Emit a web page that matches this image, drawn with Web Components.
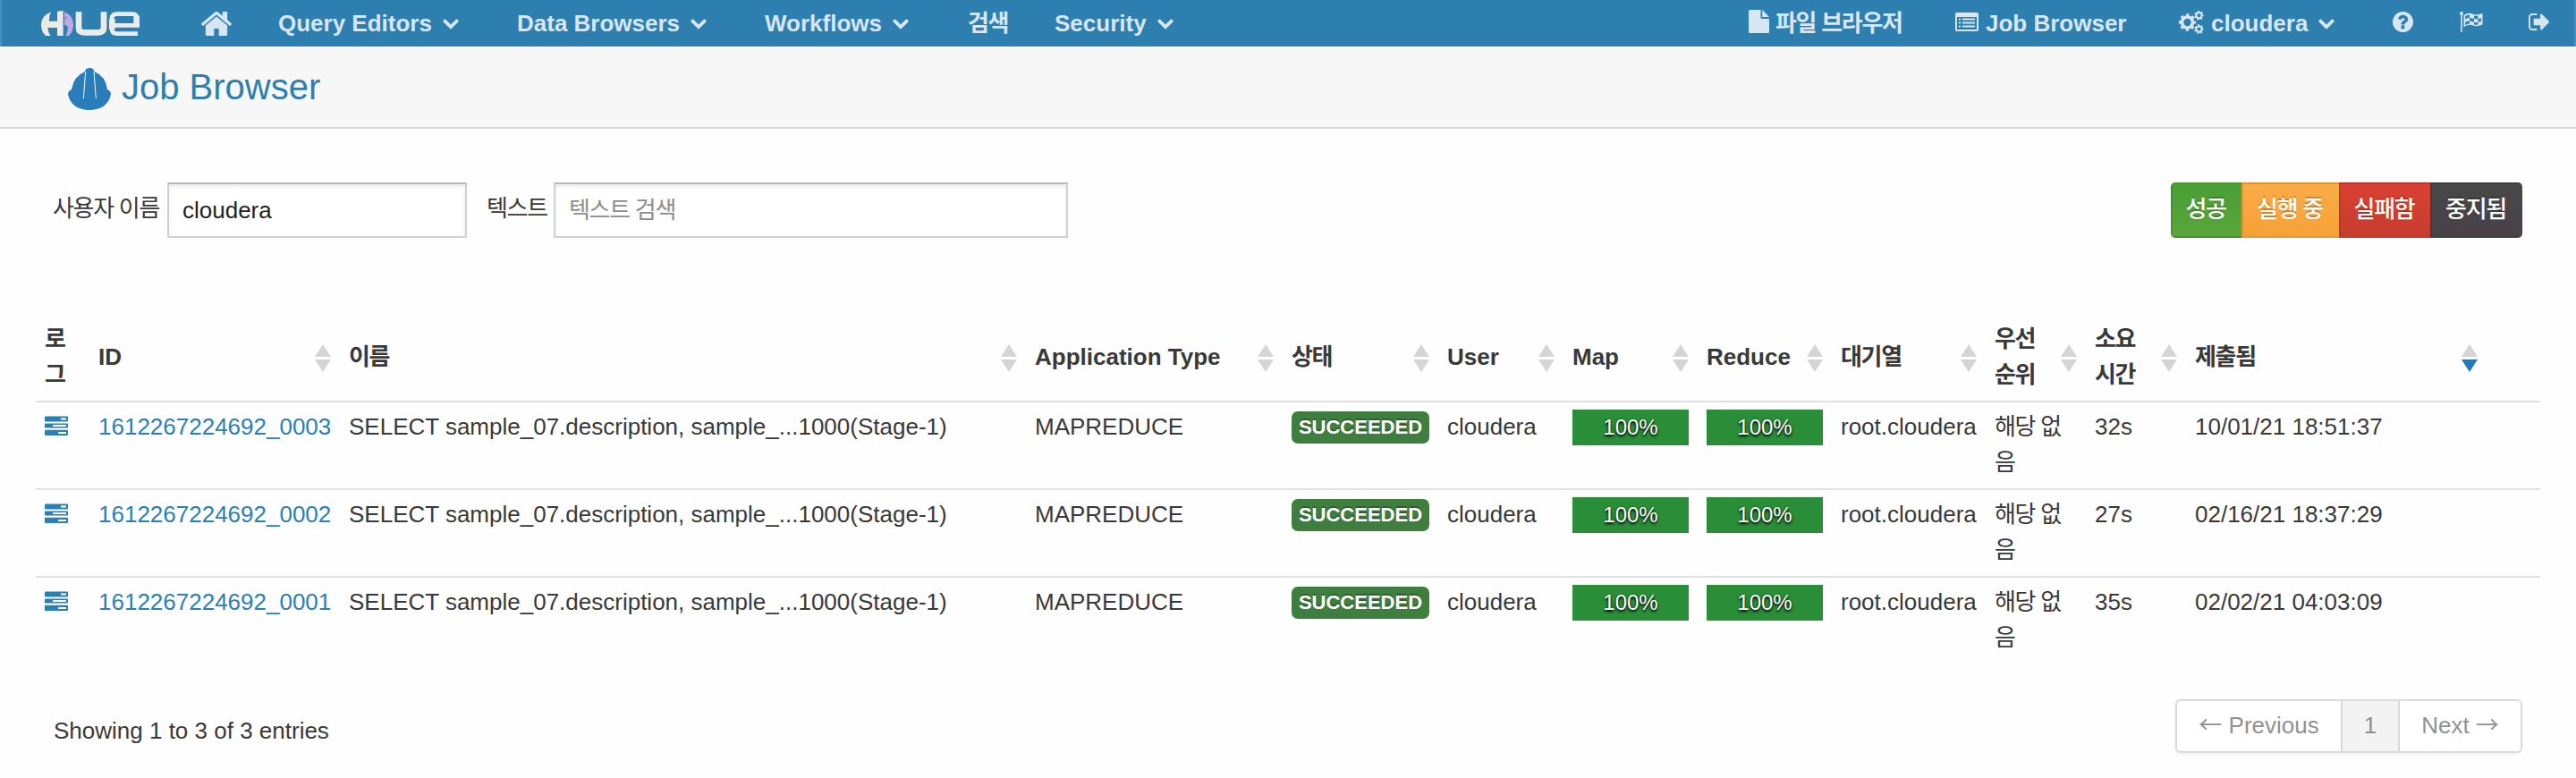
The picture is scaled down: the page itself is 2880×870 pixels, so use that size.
<!DOCTYPE html>
<html lang="ko">
<head>
<meta charset="utf-8">
<title>Job Browser</title>
<style>
html,body{margin:0;padding:0}
body{width:2880px;height:870px;overflow:hidden;background:#fefefe;color:#393939;font:26px/40px "Liberation Sans","Noto Sans CJK KR",sans-serif}
</style>
</head>
<body>
<hue-app></hue-app>
<script>
const define = (name, css, html, setup) => customElements.define(name, class extends HTMLElement {
  connectedCallback() {
    if (this.shadowRoot) return;
    const root = this.attachShadow({ mode: 'open' });
    root.innerHTML = '<style>*{box-sizing:border-box}' + css + '</style>' + (typeof html === 'function' ? html(this) : html);
    if (setup) setup(this, root);
  }
});

const gear = (x, y, r, n, w) => {
  const c = 2 * Math.PI * r;
  return `<circle cx="${x}" cy="${y}" r="${r - w * .45}" fill="none" stroke="currentColor" stroke-width="${w}"/>` +
    `<circle cx="${x}" cy="${y}" r="${r}" fill="none" stroke="currentColor" stroke-width="${w * 1.15}" stroke-dasharray="${c / n / 2}" stroke-dashoffset="${c / n / 4}"/>`;
};

const ICONS = {
  home: ['89 253 1614 1283', 34, 27, '<path d="M1472 992v480q0 26-19 45t-45 19h-384v-384h-256v384h-384q-26 0-45-19t-19-45v-480q0-1 .5-3t.5-3l575-474 575 474q1 2 1 6zm223-69l-62 74q-8 9-21 11h-3q-13 0-21-7l-692-577-692 577q-12 8-24 7-13-2-21-11l-62-74q-8-10-7-23.5t11-21.5l719-599q32-26 76-26t76 26l244 204v-195q0-14 9-23t23-9h192q14 0 23 9t9 23v408l219 182q10 8 11 21.5t-7 23.5z"/>'],
  chevron: ['0 0 18 12', 18, 12, '<path d="M2.4 2.6L9 9L15.6 2.6" fill="none" stroke="currentColor" stroke-width="3.8" stroke-linecap="round"/>'],
  file: ['0 0 23 26', 23, 26, '<path d="M1.5 0H13.5V8.5Q13.5 10 15 10H23V24.5Q23 26 21.5 26H1.5Q0 26 0 24.5V1.5Q0 0 1.5 0zM15.3 0L23 8H15.3z"/>'],
  list: ['0 0 26 21', 26, 21, '<path fill-rule="evenodd" d="M2 0H24Q26 0 26 2V19Q26 21 24 21H2Q0 21 0 19V2Q0 0 2 0zM2 5V18.5Q2 19 2.500 19H23.500Q24 19 24 18.500V5z"/><path d="M4 6.500h2v2H4zm4 0h14v2H8zM4 10.500h2v2H4zm4 0h14v2H8zM4 14.500h2v2H4zm4 0h14v2H8z"/>'],
  gears: ['0 0 28 26', 28, 26, gear(9.5, 13, 7.6, 8, 3.6) + gear(22.5, 5.2, 4.1, 7, 2.1) + gear(22.5, 20.6, 4.1, 7, 2.1)],
  help: ['128 128 1536 1536', 23, 23, '<path d="M1024 1376v-192q0-14-9-23t-23-9h-192q-14 0-23 9t-9 23v192q0 14 9 23t23 9h192q14 0 23-9t9-23zm256-672q0-88-55.500-163t-138.500-116-170-41q-243 0-371 213-15 24 8 42l132 100q7 6 19 6 16 0 25-12 53-68 86-92 34-24 86-24 48 0 85.500 26t37.500 59q0 38-20 61t-68 45q-63 28-115.500 86.500t-52.500 125.500v36q0 14 9 23t23 9h192q14 0 23-9t9-23q0-19 21.500-49.500t54.500-49.500q32-18 49-28.500t46-35 44.500-48 28-60.500 12.500-81zm384 192q0 209-103 385.500t-279.500 279.500-385.500 103-385.500-103-279.500-279.500-103-385.500 103-385.500 279.500-279.500 385.500-103 385.500 103 279.500 279.500 103 385.500z"/>'],
  flag: ['0 0 26 23', 26, 23, '<circle cx="2" cy="2" r="2"/><path d="M1.200 2h1.600v21H1.200z"/><path fill-rule="evenodd" d="M4.500 4Q10 .5 14 2.500T25.500 2V14.500Q19 17.500 15 15.500T4.500 17zM6.200 5V8.500Q8.500 7 11 6.800V3.400Q8.500 3.600 6.200 5zM16 4.500V8Q13.500 7.600 11 6.800V10.600Q13.500 11 16 12V8Q18 8.700 20.500 8V4.500Q18 5 16 4.500zM6.200 11.800V15Q8.500 13.800 11 13.500V10.500Q8.500 10.600 6.200 11.800zM20.500 8V11.800Q22.500 11.500 24 10.800V7Q22.500 7.800 20.500 8zM16 12V14.400Q18 14.900 20.500 14.500V11.800Q18 12.500 16 12z"/>'],
  signout: ['64 256 1568 1280', 23, 19, '<path d="M704 1440q0 4 1 20t.5 26.500-3 23.500-10 19.500-20.500 6.500h-320q-119 0-203.500-84.500t-84.500-203.500v-704q0-119 84.500-203.500t203.500-84.500h320q13 0 22.500 9.500t9.500 22.500q0 4 1 20t.5 26.500-3 23.500-10 19.500-20.500 6.500h-320q-66 0-113 47t-47 113v704q0 66 47 113t113 47h312l11.500 1 11.500 3 8 5.500 7 9 2 13.500zm928-544q0 26-19 45l-544 544q-19 19-45 19t-45-19-19-45v-288h-448q-26 0-45-19t-19-45v-384q0-26 19-45t45-19h448v-288q0-26 19-45t45-19 45 19l544 544q19 19 19 45z"/>'],
  tasks: ['0 0 26 22', 26, 22, '<path fill-rule="evenodd" d="M1 .5H25Q26 .5 26 1.500V5.500Q26 6.500 25 6.500H1Q0 6.500 0 5.500V1.500Q0 .5 1 .5zM18 2.500V4.500H24V2.500zM1 8.500H25Q26 8.500 26 9.500V12.500Q26 13.500 25 13.500H1Q0 13.500 0 12.500V9.500Q0 8.500 1 8.500zM9 10V12H24V10zM1 15.800H25Q26 15.800 26 16.800V21Q26 22 25 22H1Q0 22 0 21V16.800Q0 15.800 1 15.800zM15 18V20H24V18z"/>'],
  hat: ['138 228 144 140', 48, 47, '<path d="M150 300Q158 255 194 241Q197 228 211 228Q224 228 227 241Q264 255 270 300Q282 304 282 316Q270 368 210 368Q150 368 138 316Q138 304 150 300z"/><path d="M197 240L190 330M225 240L232 330" stroke="#f7f7f7" stroke-width="3"/>'],
  logo: ['48 33 330 84', 110, 28, '<g fill="#ebebeb"><path d="M82 37Q74 50 75 68H102V35L122 33V117H102V90H70Q71 106 80 117H63Q48 102 48 80Q48 50 82 37z"/></g><path fill="#bca9e6" d="M126 37Q156 50 156 80Q155 106 140 117H130Q141 96 136 84L126 80z"/><path fill="#2d7fb0" d="M129 55h5v3h-3v4h-2z"/><g fill="none" stroke="#ebebeb"><path stroke-width="20" d="M174 37V90Q174 106 192 106H240Q258 106 258 90V37"/><path stroke-width="14" d="M286 82H370V60Q370 44 354 44H302Q285 44 285 60V94Q285 110 302 110H372"/><path stroke-width="20" d="M286 60V96M368 52V88"/></g>']
};
define('hue-icon', ':host{display:block;flex:none}svg{display:block;fill:currentColor}', el => {
  const [vb, w, h, body] = ICONS[el.getAttribute('name')];
  return `<svg viewBox="${vb}" width="${w}" height="${h}" preserveAspectRatio="none">${body}</svg>`;
});

define('nav-item', ':host{display:flex;align-items:center;flex:none;height:52px;font-weight:700;line-height:52px;white-space:nowrap;letter-spacing:var(--ls,0)}.c{margin:1px 0 0 12px}',
  el => '<slot name="icon"></slot><slot></slot>' + (el.hasAttribute('menu') ? '<hue-icon class="c" name="chevron"></hue-icon>' : ''));

define('nav-bar', `:host{display:flex;height:52px;background:#2d7fb0;color:#d8e6f1;box-shadow:inset 2px 0 #4a90ba,inset -2px 0 #4a90ba}
nav{display:grid;align-items:center}
.l{grid-template-columns:179px 86px 267px 277px 227px 97px 200px;padding-left:46px}
.r{grid-template-columns:231px 250px 239px 75px 77px 53px;margin-left:auto}
.kr{--ls:-1.3px}`,
`<nav class="l"><hue-icon name="logo"></hue-icon><hue-icon name="home"></hue-icon>
<nav-item menu>Query Editors</nav-item><nav-item menu>Data Browsers</nav-item><nav-item menu>Workflows</nav-item><nav-item class="kr">검색</nav-item><nav-item menu>Security</nav-item></nav>
<nav class="r"><nav-item class="kr"><hue-icon slot="icon" name="file" style="margin:-4px 7px 0 0"></hue-icon>파일 브라우저</nav-item>
<nav-item><hue-icon slot="icon" name="list" style="margin:-4px 8px 0 0"></hue-icon>Job Browser</nav-item>
<nav-item menu><hue-icon slot="icon" name="gears" style="margin:-3px 8px 0 0"></hue-icon>cloudera</nav-item>
<hue-icon name="help" style="margin-top:-3px"></hue-icon><hue-icon name="flag" style="margin-top:-3px"></hue-icon><hue-icon name="signout" style="margin-top:-3px"></hue-icon></nav>`);

define('page-title', ':host{display:flex;align-items:center;gap:12px;height:92px;padding-left:76px;background:#f7f7f7;border-bottom:2px solid #d8d8d8;color:#2d7fb0;font-size:40px;box-sizing:border-box}hue-icon{color:#2a7dbb;margin-top:4px}',
'<hue-icon name="hat"></hue-icon><span><slot></slot></span>');

define('filter-field', `:host{display:flex;align-items:center}
label{white-space:nowrap;letter-spacing:-1.300px;width:var(--lw);margin-top:-5px}
input{width:var(--w);height:62px;border:2px solid #d0d0d0;border-top-color:#b8b8b8;padding:0 15px;background:#fff;font:inherit;color:#222;box-shadow:inset 0 3px 4px rgba(0,0,0,.08);letter-spacing:inherit}
input::placeholder{color:#8c8c8c;opacity:1;letter-spacing:-1.300px}`,
el => `<label>${el.getAttribute('label')}</label><input value="${el.getAttribute('value') || ''}" placeholder="${el.getAttribute('hint') || ''}">`);

define('state-button', ':host{display:flex;align-items:center;justify-content:center;box-sizing:border-box;height:62px;width:var(--w);color:#fff;letter-spacing:-1.300px;font-weight:500;background:linear-gradient(var(--a),var(--b));border:2px solid rgba(0,0,0,.1);border-right-width:0;text-shadow:0 -2px 0 rgba(0,0,0,.2)}span{margin:-3px 3px 0 0;white-space:nowrap}', '<span><slot></slot></span>');

define('filter-bar', `:host{display:flex;align-items:center;height:62px;margin-top:60px;padding:0 60px 0 59px}
.g{display:flex;margin-left:auto;border-radius:5px;overflow:hidden}
filter-field{margin-right:22px}`,
`<filter-field label="사용자 이름" value="cloudera" style="--lw:128px;--w:335px"></filter-field>
<filter-field label="텍스트" hint="텍스트 검색" style="--lw:75px;--w:575px"></filter-field>
<div class="g"><state-button style="--w:79px;--a:#499f35;--b:#5aa63c">성공</state-button><state-button style="--w:109px;--a:#fbac46;--b:#f5a136">실행 중</state-button><state-button style="--w:102px;--a:#da4132;--b:#c63d2e">실패함</state-button><state-button style="--w:103px;--a:#484848;--b:#484147">중지됨</state-button></div>`);

define('sort-mark', ':host{display:block;flex:none}svg{display:block}', el =>
  `<svg width="18" height="31" viewBox="0 0 18 31"><path fill="#d5d5d5" d="M9 0L18 14H0z"/><path fill="${el.hasAttribute('desc') ? '#2779b5' : '#d5d5d5'}" d="M0 17H18L9 31z"/></svg>`);

const COLS = '60px 280px 767px 287px 174px 140px 150px 150px 172px 112px 112px 336px 60px';
define('head-cell', ':host{display:flex;align-items:center;justify-content:space-between;padding:0 10px;font-weight:700;height:98px;box-sizing:border-box}:host([kr]){letter-spacing:-1.300px}span{white-space:nowrap;margin-top:-1px}sort-mark{margin-top:3px}',
  el => '<span><slot></slot></span>' + (el.hasAttribute('nosort') ? '' : `<sort-mark ${el.hasAttribute('desc') ? 'desc' : ''}></sort-mark>`));

define('progress-pill', ':host{display:block;height:40px;background:#2a8e39;color:#fff;font-size:24px;line-height:40px;text-align:center;text-shadow:0 2px 3px #000,0 0 2px rgba(0,0,0,.6)}', '<slot></slot>');
define('state-badge', ':host{display:block;height:36px;margin-top:2px;border-radius:7px;background:#3e7e3f;color:#fff;font-weight:700;font-size:22px;line-height:36px;text-align:center;text-shadow:0 -2px 0 rgba(0,0,0,.25)}', '<slot></slot>');

define('job-row', `:host{display:grid;grid-template-columns:${COLS};height:98px;box-sizing:border-box;border-top:2px solid #e0e0e0}
div{padding:8px 10px;white-space:nowrap}
.t{margin-top:-1px}
.kr{white-space:normal;letter-spacing:-1.300px;word-break:break-all}
.a{color:#2d7fb0}.i{padding-top:15px}`,
el => { const g = n => el.getAttribute(n); return `<div class="a i"><hue-icon name="tasks"></hue-icon></div><div class="a t">${g('job')}</div><div class="t">SELECT sample_07.description, sample_...1000(Stage-1)</div><div class="t">MAPREDUCE</div><div><state-badge>SUCCEEDED</state-badge></div><div class="t">cloudera</div><div><progress-pill>100%</progress-pill></div><div><progress-pill>100%</progress-pill></div><div class="t">root.cloudera</div><div class="t kr">해당 없음</div><div class="t">${g('time')}</div><div class="t">${g('at')}</div>`; });

define('job-table', `:host{display:block;margin:84px 40px 0}header{display:grid;grid-template-columns:${COLS}}`,
`<header><head-cell kr nosort>로<br>그</head-cell><head-cell>ID</head-cell><head-cell kr>이름</head-cell><head-cell>Application Type</head-cell><head-cell kr>상태</head-cell><head-cell>User</head-cell><head-cell>Map</head-cell><head-cell>Reduce</head-cell><head-cell kr>대기열</head-cell><head-cell kr>우선<br>순위</head-cell><head-cell kr>소요<br>시간</head-cell><head-cell kr desc>제출됨</head-cell></header>
<job-row job="1612267224692_0003" time="32s" at="10/01/21 18:51:37"></job-row>
<job-row job="1612267224692_0002" time="27s" at="02/16/21 18:37:29"></job-row>
<job-row job="1612267224692_0001" time="35s" at="02/02/21 04:03:09"></job-row>`);

define('table-footer', `:host{display:flex;justify-content:space-between;padding:40px 60px 0}
p{margin:15px 0 0}
.p{display:flex;height:60px;border:2px solid #dadada;border-radius:6px;color:#919191;line-height:54px;background:#fff;box-shadow:0 2px 4px rgba(0,0,0,.05);overflow:hidden}
.p span{height:56px;padding:0;text-align:center;white-space:nowrap}.p .n{background:#f3f3f3;border:solid #dadada;border-width:0 2px;padding:0;width:66px}.p .v{width:183px}.p .x{width:135px}
i{font-family:"Noto Sans CJK KR",sans-serif;font-style:normal;line-height:1px}`,
'<p>Showing 1 to 3 of 3 entries</p><div class="p"><span class="v"><i>←</i> Previous</span><span class="n">1</span><span class="x">Next <i>→</i></span></div>');

define('hue-app', ':host{display:block}', '<nav-bar></nav-bar><page-title>Job Browser</page-title><filter-bar></filter-bar><job-table></job-table><table-footer></table-footer>');
</script>
</body>
</html>
